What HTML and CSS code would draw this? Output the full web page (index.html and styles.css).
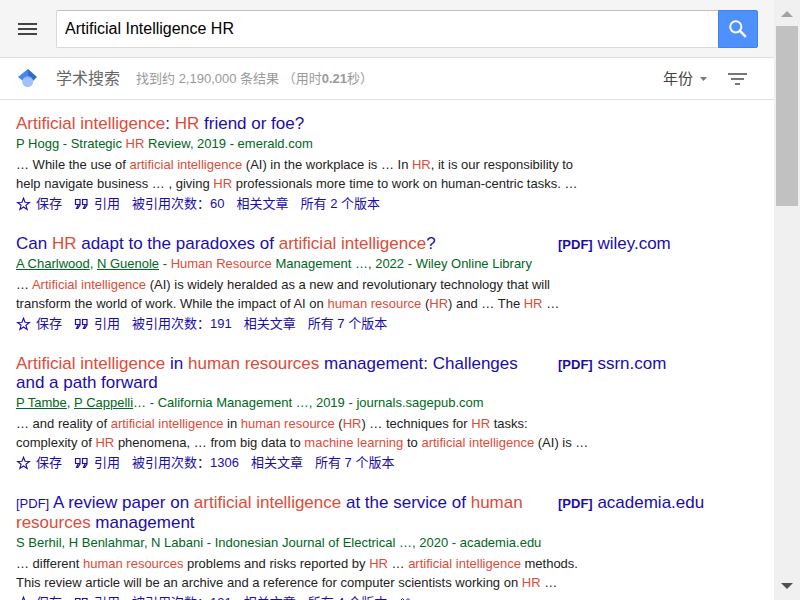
FILE: index.html
```html
<!DOCTYPE html>
<html lang="zh-CN">
<head>
<meta charset="utf-8">
<meta name="viewport" content="width=device-width, initial-scale=1">
<title>Artificial Intelligence HR - 学术搜索</title>
<link rel="stylesheet" href="styles.css">
</head>
<body>
<svg class="sprites" aria-hidden="true">
  <symbol id="star" viewBox="0 0 15 15"><path d="M7.5 1.2 9 5.3 13.4 5.5 9.9 8.2 11.1 12.4 7.5 10 3.9 12.4 5.1 8.2 1.6 5.5 6 5.3Z" fill="none" stroke="currentColor" stroke-width="1.1"/></symbol>
  <symbol id="quote" viewBox="0 0 15 13"><path d="M6 6.5H1.5V1.5H6V7L3.8 10.5H2.5L4.3 6.5M13 6.5H8.5V1.5H13V7L10.8 10.5H9.5L11.3 6.5" fill="none" stroke="currentColor" stroke-width="1.2"/></symbol>
</svg>
<div class="page">
  <header class="top">
    <button class="menu" type="button" aria-label="菜单"><svg width="19" height="12" viewBox="0 0 19 12"><path d="M0 1H19M0 6H19M0 11H19" stroke="#444" stroke-width="2"/></svg></button>
    <form class="search">
      <input type="text" aria-label="搜索" value="Artificial Intelligence HR">
      <button type="submit" aria-label="搜索"><svg width="18" height="18" viewBox="0 0 18 18"><circle cx="6.8" cy="6.8" r="5.6" fill="none" stroke="#fff" stroke-width="2"/><path d="M10.7 10.7 16.8 16.8" stroke="#fff" stroke-width="2.6"/></svg></button>
    </form>
  </header>
  <div class="bar">
    <svg class="logo" width="20" height="19" viewBox="0 0 20 19"><path d="M0 8 10 0V10L5 12Z" fill="#4285f4"/><path d="M10 0 19 8 15 12 10 10Z" fill="#356ac3"/><circle cx="9.7" cy="12.7" r="5.5" fill="#a0c3ff"/><path d="M4.7 10.6A5.5 5.5 0 0 1 14.7 10.6 7 7 0 0 0 4.7 10.6" fill="#76a7fa"/></svg>
    <span class="name">学术搜索</span>
    <span class="count">找到约 2,190,000 条结果 （用时<b>0.21</b>秒）</span>
    <button class="year" type="button">年份<svg width="7" height="4" viewBox="0 0 7 4"><path d="M0 0H7L3.5 4Z" fill="#777"/></svg></button>
    <button class="filter" type="button" aria-label="筛选"><svg width="19" height="12" viewBox="0 0 19 12"><path d="M0 1H19M3 6H16M7 11H12" stroke="#777" stroke-width="2"/></svg></button>
  </div>
  <main class="results">
    <article>
      <div class="head"><h3><a href="#"><em>Artificial intelligence</em>: <em>HR</em> friend or foe?</a></h3></div>
      <p class="meta">P Hogg - Strategic <em>HR</em> Review, 2019 - emerald.com</p>
      <p class="snippet">… While the use of <em>artificial intelligence</em> (AI) in the workplace is … In <em>HR</em>, it is our responsibility to<br>help navigate business … , giving <em>HR</em> professionals more time to work on human-centric tasks. …</p>
      <div class="links"><a href="#"><svg class="star"><use href="#star"/></svg>保存</a><a href="#"><svg class="quote"><use href="#quote"/></svg>引用</a><a href="#">被引用次数：60</a><a href="#">相关文章</a><a href="#">所有 2 个版本</a></div>
    </article>
    <article>
      <div class="head"><h3><a href="#">Can <em>HR</em> adapt to the paradoxes of <em>artificial intelligence</em>?</a></h3><a class="pdf" href="#"><b>[PDF]</b> wiley.com</a></div>
      <p class="meta"><a href="#">A Charlwood</a>, <a href="#">N Guenole</a> - <em>Human Resource</em> Management …, 2022 - Wiley Online Library</p>
      <p class="snippet">… <em>Artificial intelligence</em> (AI) is widely heralded as a new and revolutionary technology that will<br>transform the world of work. While the impact of AI on <em>human resource</em> (<em>HR</em>) and … The <em>HR</em> …</p>
      <div class="links"><a href="#"><svg class="star"><use href="#star"/></svg>保存</a><a href="#"><svg class="quote"><use href="#quote"/></svg>引用</a><a href="#">被引用次数：191</a><a href="#">相关文章</a><a href="#">所有 7 个版本</a></div>
    </article>
    <article>
      <div class="head"><h3><a href="#"><em>Artificial intelligence</em> in <em>human resources</em> management: Challenges and a path forward</a></h3><a class="pdf" href="#"><b>[PDF]</b> ssrn.com</a></div>
      <p class="meta"><a href="#">P Tambe</a>, <a href="#">P Cappelli</a>… - California Management …, 2019 - journals.sagepub.com</p>
      <p class="snippet">… and reality of <em>artificial intelligence</em> in <em>human resource</em> (<em>HR</em>) … techniques for <em>HR</em> tasks:<br>complexity of <em>HR</em> phenomena, … from big data to <em>machine learning</em> to <em>artificial intelligence</em> (AI) is …</p>
      <div class="links"><a href="#"><svg class="star"><use href="#star"/></svg>保存</a><a href="#"><svg class="quote"><use href="#quote"/></svg>引用</a><a href="#">被引用次数：1306</a><a href="#">相关文章</a><a href="#">所有 7 个版本</a></div>
    </article>
    <article>
      <div class="head"><h3><a href="#"><small>[PDF]</small> A review paper on <em>artificial intelligence</em> at the service of <em>human resources</em> management</a></h3><a class="pdf" href="#"><b>[PDF]</b> academia.edu</a></div>
      <p class="meta">S Berhil, H Benlahmar, N Labani - Indonesian Journal of Electrical …, 2020 - academia.edu</p>
      <p class="snippet">… different <em>human resources</em> problems and risks reported by <em>HR</em> … <em>artificial intelligence</em> methods.<br>This review article will be an archive and a reference for computer scientists working on <em>HR</em> …</p>
      <div class="links"><a href="#"><svg class="star"><use href="#star"/></svg>保存</a><a href="#"><svg class="quote"><use href="#quote"/></svg>引用</a><a href="#">被引用次数：131</a><a href="#">相关文章</a><a href="#">所有 4 个版本</a><a href="#" aria-label="更多"><svg width="12" height="12" viewBox="0 0 12 12"><path d="M1 4 3.5 1.5 6 4M6.5 4 9 1.5 11.5 4" fill="none" stroke="currentColor"/></svg></a></div>
    </article>
  </main>
</div>
<div class="scrollbar" aria-hidden="true">
  <svg width="12" height="6" viewBox="0 0 12 6"><path d="M0 6 6 0 12 6Z" fill="#a3a3a3"/></svg>
  <div class="thumb"></div>
  <svg class="down" width="12" height="6" viewBox="0 0 12 6"><path d="M0 0H12L6 6Z" fill="#505050"/></svg>
</div>
</body>
</html>
```
FILE: styles.css
```css
* { box-sizing: border-box; }
body {
  margin: 0;
  display: flex;
  height: 100vh;
  overflow: hidden;
  background: #fff;
  color: #222;
  font: 13px/19px "Liberation Sans", "Noto Sans CJK SC", sans-serif;
}
.sprites { position: absolute; width: 0; height: 0; }
svg { display: block; flex: none; }
a { color: #1a0dab; text-decoration: none; }
button { border: 0; padding: 0; background: none; font: inherit; cursor: pointer; }
em { font-style: normal; color: #dd4b39; }
.page { flex: 1; min-width: 0; }

.top {
  display: flex;
  align-items: center;
  padding: 10px 16px 9px 18px;
  background: #f5f5f5;
  border-bottom: 1px solid #e0e0e0;
}
.menu { width: 38px; }
.search { display: flex; flex: 1; height: 38px; }
.search input {
  flex: 1;
  min-width: 0;
  padding: 0 8px;
  border: 1px solid #d9d9d9;
  border-top-color: #c0c0c0;
  border-right: 0;
  border-radius: 2px 0 0 2px;
  background: #fff;
  color: #000;
  font: 16px "Liberation Sans", sans-serif;
  outline: 0;
}
.search button {
  display: grid;
  place-items: center;
  width: 40px;
  border: 1px solid #3f83f1;
  border-radius: 0 2px 2px 0;
  background: #4d90fe;
}

.bar {
  display: flex;
  align-items: center;
  height: 42px;
  padding: 0 27px 0 18px;
  border-bottom: 1px solid #e0e0e0;
}
.name { margin: 0 16px 0 18px; color: #666; font-size: 16px; }
.count { color: #999; white-space: pre; }
.year {
  display: flex;
  align-items: center;
  gap: 7px;
  margin-left: auto;
  color: #444;
  font-size: 15px;
}
.filter { margin-left: 21px; }

.results { padding: 14px 16px 0; }
article { margin-bottom: 20px; white-space: nowrap; }
.head { display: flex; gap: 32px; margin-bottom: 1px; white-space: normal; }
h3 { flex: 0 1 510px; margin: 0; font-size: 17px; font-weight: 400; }
small { font-size: 13px; }
.pdf { font-size: 17px; white-space: nowrap; }
.pdf b { font-size: 13px; line-height: 1; }
p { margin: 0; }
.meta { color: #006621; line-height: 20px; }
.meta a { color: #006621; text-decoration: underline; }
.snippet { margin-top: 1px; }
.links { display: flex; gap: 12px; height: 20px; margin-top: 1px; line-height: 20px; }
.links a { display: flex; align-items: center; gap: 5px; }
.star { width: 15px; height: 15px; }
.quote { width: 15px; height: 13px; }

.scrollbar {
  display: flex;
  flex-direction: column;
  align-items: center;
  width: 26px;
  padding: 11px 2px;
  background: #f0f0f0;
}
.thumb { width: 100%; height: 30vh; margin-top: 9px; background: #c1c1c1; }
.down { margin-top: auto; }
```
